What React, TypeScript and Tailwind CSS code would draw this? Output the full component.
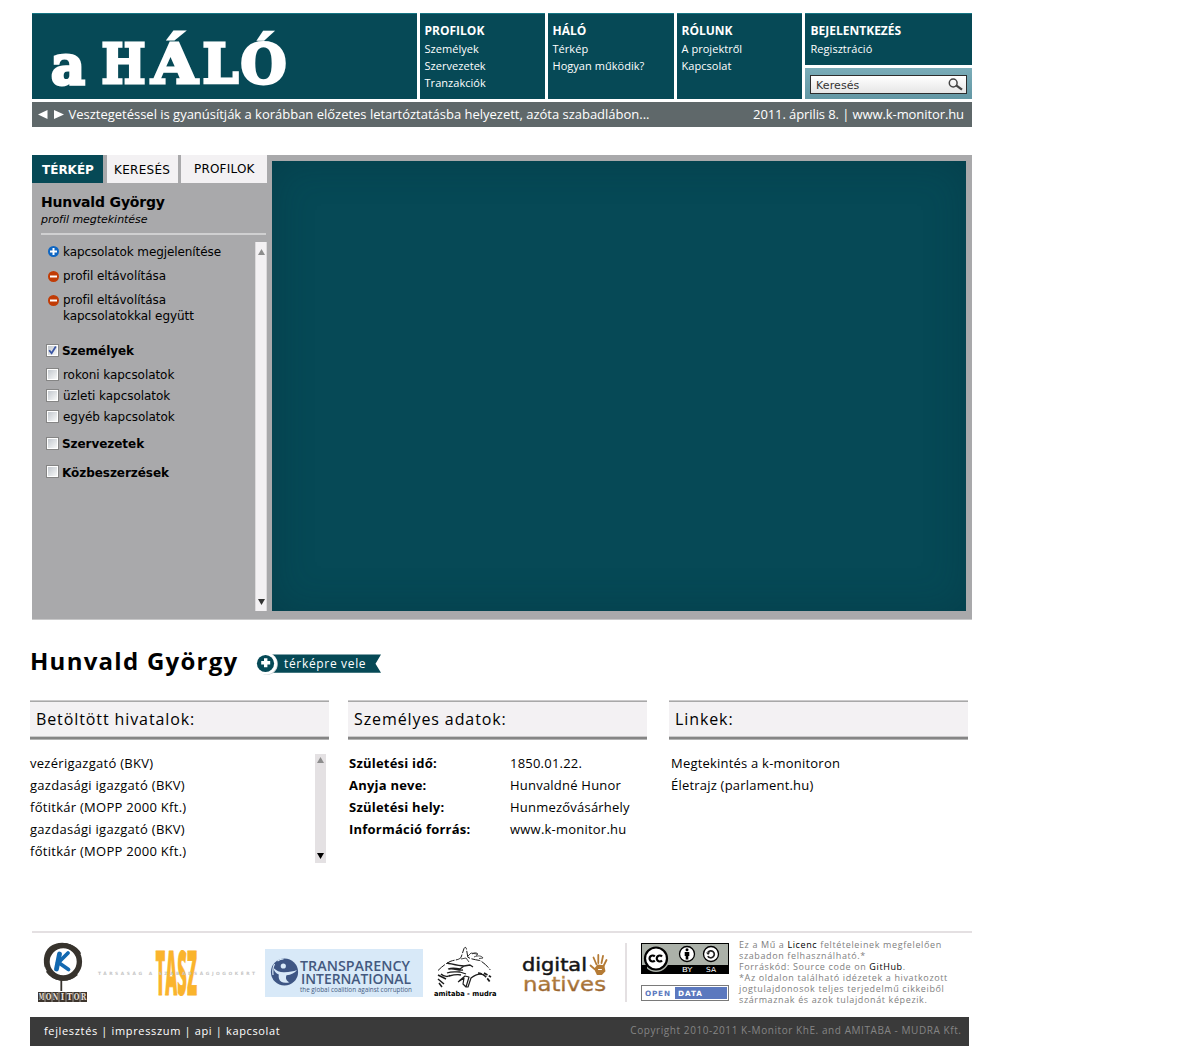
import type { ReactNode } from "react";

const DARK = "#064956";

const navGroups = [
  { title: "PROFILOK", width: "w-[125px]", items: ["Személyek", "Szervezetek", "Tranzakciók"] },
  { title: "HÁLÓ", width: "w-[126px]", items: ["Térkép", "Hogyan működik?"] },
  { title: "RÓLUNK", width: "w-[125px]", items: ["A projektről", "Kapcsolat"] },
];

function NavGroup({ title, items, className }: { title: string; items: string[]; className: string }) {
  return (
    <div className={`border-t border-[#157583] bg-[#064956] pt-2 text-white ${className}`}>
      <div className="mb-px text-[12px] leading-[17px] font-bold">{title}</div>
      {items.map((item) => (
        <div key={item} className="text-[11px] leading-[17px] tracking-[0.04px]">
          {item}
        </div>
      ))}
    </div>
  );
}

function Logo() {
  return (
    <svg width="385" height="85" viewBox="32 14 385 85" role="img" aria-label="a HÁLÓ">
      <g
        fill="#fff"
        stroke="#fff"
        strokeWidth="3"
        fontFamily="'DejaVu Serif'"
        fontWeight="700"
        fontSize="53.5"
      >
        <text x="51" y="83.5" textLength="34" lengthAdjust="spacingAndGlyphs">a</text>
        <text y="82.500">
          <tspan x="101.500" textLength="44" lengthAdjust="spacingAndGlyphs">H</tspan>
          <tspan x="151.500" textLength="46" lengthAdjust="spacingAndGlyphs">Á</tspan>
          <tspan x="202.500" textLength="36" lengthAdjust="spacingAndGlyphs">L</tspan>
          <tspan x="240.500" textLength="46" lengthAdjust="spacingAndGlyphs">Ó</tspan>
        </text>
      </g>
    </svg>
  );
}

function Header() {
  return (
    <header className="ml-[32px] flex h-[86px] w-[940px] gap-[3px]">
      <div className="w-[385px] border-t border-[#157583] bg-[#064956]">
        <Logo />
      </div>
      {navGroups.map((g) => (
        <NavGroup key={g.title} title={g.title} items={g.items} className={`${g.width} pl-[4.5px]`} />
      ))}
      <div className="flex w-[167px] flex-col gap-[3px]">
        <NavGroup title="BEJELENTKEZÉS" items={["Regisztráció"]} className="h-[52px] pl-[5.5px]" />
        <div className="h-[31px] bg-gradient-to-b from-[#7aacb8] to-[#6397a4] px-[5px] pt-[7px]">
          <div className="flex h-[19px] items-center justify-between border border-[#2d2d2d] bg-gradient-to-b from-white to-[#e6e6e6] pr-[3px] pl-[5px] font-['DejaVu_Sans'] text-[11px] leading-[17px] tracking-[0.1px] text-[#333]">
            <span className="pt-px">Keresés</span>
            <svg width="15" height="13" viewBox="0 0 15 13" fill="none" stroke="#444">
              <circle cx="5.2" cy="5" r="3.9" strokeWidth="1.5" />
              <path d="M8.2 7.400 14 11.600" strokeWidth="2.300" />
            </svg>
          </div>
        </div>
      </div>
    </header>
  );
}

function NewsBar() {
  return (
    <div className="mt-[3px] ml-[32px] flex h-[25px] w-[940px] items-center bg-[#5f686a] pb-px text-[13px] leading-[24px] text-white">
      <svg width="26" height="11" viewBox="0 0 26 11" fill="#fff" className="ml-[6px]">
        <path d="M0 5.500 9.500 1v9z" />
        <path d="M26 5.500 16 1v9z" />
      </svg>
      <span className="ml-[4.500px] tracking-[-0.01px] whitespace-nowrap">
        Vesztegetéssel is gyanúsítják a korábban előzetes letartóztatásba helyezett, azóta szabadlábon...
      </span>
      <span className="mr-[8px] ml-auto tracking-[-0.09px]">2011. április 8. | www.k-monitor.hu</span>
    </div>
  );
}

function ScrollBar({ className, down = "#333" }: { className: string; down?: string }) {
  return (
    <div className={`flex flex-col items-center justify-between ${className}`}>
      <svg width="7" height="6" viewBox="0 0 7 6">
        <path d="M3.5 0 7 6H0z" fill="#8d8d8d" />
      </svg>
      <svg width="7" height="6" viewBox="0 0 7 6">
        <path d="M3.5 6 7 0H0z" fill={down} />
      </svg>
    </div>
  );
}

function ActionRow({ kind, children, className }: { kind: "plus" | "minus"; children: ReactNode; className: string }) {
  return (
    <div className={`flex text-[12px] leading-[16px] ${className}`}>
      <svg
        width="11"
        height="11"
        viewBox="0 0 11 11"
        className={kind === "plus" ? "mt-[2px] mr-[4px] shrink-0" : "mt-[3px] mr-[4px] shrink-0"}
      >
        <circle cx="5.5" cy="5.5" r="5.5" fill={kind === "plus" ? "#0f66c2" : "#c13c06"} />
        <path d="M2 5.5h7" stroke="#fff" strokeWidth="2" />
        {kind === "plus" && <path d="M5.5 2v7" stroke="#fff" strokeWidth="2" />}
      </svg>
      <div>{children}</div>
    </div>
  );
}

function CheckRow({
  label,
  checked = false,
  bold = false,
  className,
}: {
  label: string;
  checked?: boolean;
  bold?: boolean;
  className: string;
}) {
  return (
    <div className={`flex h-[13px] text-[12px] leading-[15px] ${className}`}>
      <span className="mr-[3px] block h-[13px] w-[13px] shrink-0 border border-[#858585] bg-white p-px">
        <span className="block h-[9px] w-[9px] bg-gradient-to-br from-[#c3c8ce] to-[#f7f8f8]">
          {checked && (
            <svg width="9" height="9" viewBox="0 0 9 9" fill="none" stroke="#3a55a4" strokeWidth="1.8">
              <path d="M1.2 4.2 3.6 7.2 7.8 0.6" />
            </svg>
          )}
        </span>
      </span>
      <span className={bold ? "font-bold tracking-[-0.05px]" : "pl-px tracking-[-0.05px]"}>{label}</span>
    </div>
  );
}

function Sidebar() {
  return (
    <aside className="flex w-[235px] flex-col font-['DejaVu_Sans'] text-black">
      <div className="flex h-[28px] text-[12px] leading-[30px]">
        <div className="w-[71px] bg-[#064956] pl-[10px] font-bold text-white">TÉRKÉP</div>
        <div className="ml-[4px] w-[71px] bg-[#f3f1f3] pl-[7px] tracking-[0.3px]">KERESÉS</div>
        <div className="ml-[3px] w-[86px] bg-[#f3f1f3] pl-[13px] leading-[28px] tracking-[0.2px]">PROFILOK</div>
      </div>
      <div className="mr-px ml-[9px] h-[52px] border-b-2 border-[#d0d0d1] pt-[9px]">
        <div className="text-[14px] leading-[20px] font-bold tracking-[-0.17px]">Hunvald György</div>
        <div className="text-[11px] leading-[16px] tracking-[-0.04px] italic">profil megtekintése</div>
      </div>
      <div className="mt-[7px] flex h-[369px] justify-between">
        <div className="pl-[14px]">
          <ActionRow kind="plus" className="mt-[2px] ml-[2px] tracking-[-0.09px]">
            kapcsolatok megjelenítése
          </ActionRow>
          <ActionRow kind="minus" className="mt-[8px] ml-[2px] tracking-[-0.05px]">
            profil eltávolítása
          </ActionRow>
          <ActionRow kind="minus" className="mt-[8px] ml-[2px] tracking-[-0.05px]">
            profil eltávolítása
            <br />
            kapcsolatokkal együtt
          </ActionRow>
          <CheckRow label="Személyek" bold checked className="mt-[20px]" />
          <CheckRow label="rokoni kapcsolatok" className="mt-[11px]" />
          <CheckRow label="üzleti kapcsolatok" className="mt-[8px]" />
          <CheckRow label="egyéb kapcsolatok" className="mt-[8px]" />
          <CheckRow label="Szervezetek" bold className="mt-[14px]" />
          <CheckRow label="Közbeszerzések" bold className="mt-[15px] leading-[17px]" />
        </div>
        <ScrollBar className="w-[12px] border-x border-[#dcdadc] bg-[#f3f1f3] pt-[7px] pb-[6px]" />
      </div>
    </aside>
  );
}

function MapPanel() {
  return (
    <section className="mt-[28px] ml-[32px] flex h-[465px] w-[940px] border-b border-[#c8c8c9] bg-[#a9a9ab]">
      <Sidebar />
      <div className="mt-[6px] ml-[5px] h-[450px] w-[694px] bg-[#064956] shadow-[inset_0_0_40px_rgba(0,40,50,0.28)]" />
    </section>
  );
}

function Ribbon() {
  return (
    <svg width="128" height="24" viewBox="255 652 128 24" className="ml-[17px]">
      <path d="M266 654.5H381L375.5 663.7 381 672.7H266z" fill={DARK} />
      <circle cx="267" cy="664" r="10.8" fill="#ccd5d7" />
      <circle cx="266" cy="663.5" r="11" fill="#fff" />
      <circle cx="265.5" cy="663.5" r="8.6" fill={DARK} />
      <path d="M261.2 662.8h9M265.7 658.3v9" stroke="#fff" strokeWidth="3.4" />
      <text x="284" y="668" fill="#fff" fontFamily="'Open Sans'" fontSize="12" letterSpacing="0.67">
        térképre vele
      </text>
    </svg>
  );
}

function Column({ title, children, className }: { title: string; children: ReactNode; className: string }) {
  return (
    <div className={`w-[299px] ${className}`}>
      <div className="border-t border-b border-t-[#cbcacb] border-b-[#b3b3b3]">
        <div className="border-t border-b-2 border-t-[#a8a8a8] border-b-[#858585]">
          <h2 className="h-[35px] border-b border-[#cbcacb] bg-[#f3f1f3] pl-[6px] text-[16px] leading-[34px] tracking-[0.9px]">
            {title}
          </h2>
        </div>
      </div>
      <div className="mt-[12px] text-[13px] leading-[22px]">{children}</div>
    </div>
  );
}

const offices = [
  "vezérigazgató (BKV)",
  "gazdasági igazgató (BKV)",
  "főtitkár (MOPP 2000 Kft.)",
  "gazdasági igazgató (BKV)",
  "főtitkár (MOPP 2000 Kft.)",
];

const facts = [
  ["Születési idő:", "1850.01.22."],
  ["Anyja neve:", "Hunvaldné Hunor"],
  ["Születési hely:", "Hunmezővásárhely"],
  ["Információ forrás:", "www.k-monitor.hu"],
];

function Profile() {
  return (
    <section className="ml-[30px] text-black">
      <div className="mt-[26px] flex h-[36px] items-center">
        <h1 className="w-[208px] pb-[6px] text-[24px] leading-[30px] font-bold tracking-[1.26px] whitespace-nowrap">
          Hunvald György
        </h1>
        <Ribbon />
      </div>
      <div className="mt-[18px] flex h-[231px]">
        <Column title="Betöltött hivatalok:" className="">
          <div className="flex justify-between">
            <ul className="tracking-[0.28px]">
              {offices.map((o, i) => (
                <li key={i}>{o}</li>
              ))}
            </ul>
            <ScrollBar down="#000" className="mt-[2px] mr-[3px] h-[109px] w-[11px] bg-[#e4e1e3] pt-[3px] pb-[4px]" />
          </div>
        </Column>
        <Column title="Személyes adatok:" className="ml-[19px]">
          <dl className="grid grid-cols-[161px_1fr] pl-px tracking-[0.22px]">
            {facts.map(([k, v]) => (
              <div key={k} className="contents">
                <dt className="font-bold">{k}</dt>
                <dd>{v}</dd>
              </div>
            ))}
          </dl>
        </Column>
        <Column title="Linkek:" className="ml-[22px]">
          <ul className="pl-[2px] tracking-[0.21px]">
            <li>Megtekintés a k-monitoron</li>
            <li>Életrajz (parlament.hu)</li>
          </ul>
        </Column>
      </div>
    </section>
  );
}

function KMonitorLogo() {
  return (
    <svg width="52" height="64" viewBox="37 941 52 64" className="ml-[5px]">
      <circle cx="63.2" cy="961.8" r="16.2" fill="#fff" stroke="#37332d" strokeWidth="5.4" />
      <path d="M46 967c-3-11 2-20 10-22 9-3 20 1 24 9M47 971c6 9 20 12 30 3" fill="none" stroke="#37332d" strokeWidth="2.6" />
      <path d="M61.3 979v12" stroke="#37332d" strokeWidth="1.8" />
      <g fill="none" stroke="#1268b0" strokeLinecap="round">
        <path d="M59.500 954 56.500 969" strokeWidth="4.8" />
        <path d="M68 953 58.500 962.5 68.500 969.500" strokeWidth="3.8" />
      </g>
      <rect x="38" y="992" width="49" height="10" fill="#3d352d" />
      {"MONITOR".split("").map((c, i) => (
        <text
          key={i}
          x={41.5 + i * 7}
          y="1000"
          textAnchor="middle"
          fill="#e4dfd9"
          fontFamily="'DejaVu Serif'"
          fontWeight="700"
          fontSize="8.5"
          textLength={c === "I" ? 3.5 : 5.6}
          lengthAdjust="spacingAndGlyphs"
        >
          {c}
        </text>
      ))}
      <path d="M45 992v10M52 992v10M59 992v10M66 992v10M73 992v10M80 992v10" stroke="#c9c3bd" strokeWidth=".7" />
    </svg>
  );
}

function TaszLogo() {
  return (
    <svg width="160" height="60" viewBox="97 944 160 60" className="ml-[8px]">
      <text
        transform="translate(155.500 995.500) scale(0.5 1.440)"
        fontFamily="'Open Sans'"
        fontWeight="800"
        fontSize="43"
        fill="#fab42d"
        stroke="#fab42d"
        strokeWidth="0.600"
        textLength="83"
        lengthAdjust="spacingAndGlyphs"
      >
        TASZ
      </text>
      <text
        x="98"
        y="976"
        fontFamily="'DejaVu Sans'"
        fontWeight="700"
        fontSize="4.4"
        fill="#c6c6c6"
        textLength="157"
        lengthAdjust="spacing"
      >
        TÁRSASÁG A SZABADSÁGJOGOKÉRT
      </text>
    </svg>
  );
}

function TransparencyLogo() {
  return (
    <svg width="158" height="48" viewBox="265 949 158 48" className="ml-[8px] bg-[#d8e9f8]">
      <circle cx="284.500" cy="972" r="13.600" fill="#3e5684" />
      <path d="M274.500 964c-2 4-2 7-1.500 11M277.500 961c2-1.500 4-2 6-2" fill="none" stroke="#d8e9f8" strokeWidth="1.200" />
      <circle cx="283.300" cy="966" r="2.600" fill="#d8e9f8" />
      <path
        d="M273.500 968c3 3 7 4.500 11 4.200 5-.3 9-.8 12.500-2.200-2 3-6 4.800-10.500 5.200-1.200 3-.3 5.500 3 7-5.500 1.500-9.500 0-10.500-3.500-.5-2-.3-3-.2-4.200-3-1-4.800-3.500-5.300-6.500z"
        fill="#d8e9f8"
      />
      <g fill="#44597f" fontFamily="'Open Sans'">
        <text x="300" y="971" fontSize="14.500" fontWeight="600" textLength="110" lengthAdjust="spacingAndGlyphs">
          TRANSPARENCY
        </text>
        <text x="301" y="984" fontSize="14.500" fontWeight="600" textLength="110" lengthAdjust="spacingAndGlyphs">
          INTERNATIONAL
        </text>
        <text x="300" y="991.500" fontSize="7" fontWeight="500" textLength="112" lengthAdjust="spacingAndGlyphs">
          the global coalition against corruption
        </text>
      </g>
    </svg>
  );
}

function AmitabaLogo() {
  return (
    <svg width="68" height="58" viewBox="432 944 68 58" className="ml-[9px]">
      <g fill="none" stroke="#1c1c1c" strokeWidth="1" strokeLinejoin="round">
        <path d="M438 970.500c4-4 8-7 12-9 5-2 8-1 11-4l3-9c.8-1.500 2-1.500 2.400.2l1.400 8.500c3 2 8 2.500 12 3.300 4 2 8 6 10.500 9.500" strokeDasharray="9 1.500" />
        <path d="M461 959l5-1 3 4M468 956l3-3 6 1M472 954c3-2 5-1 6 0l-2 1.500M474 957c4-2 8-1 9 1l-4 .5" strokeWidth=".8" />
        <path d="M447 963c5 1 11 3 17 3l-4 3c-5-1-9-1-12 0M449 969c6-1 9 2 14 1M447 973c5-2 9-1 13-1l6 2M449 976c4-1 8-2 12-1M464 966l6-1 3 2" strokeWidth="1.300" />
        <path d="M438 975l8 4M438 979l6 5M441 974c3 3 8 3 9 1M439 983l3 4" strokeWidth="1.500" />
        <path d="M459 981l6-5 4 1-3 10-3-3 1-6-6 4M466 987l2 0 3-9c5-4 9-5 13-3" strokeWidth="1.200" />
        <path d="M478 973c4 0 8 3 12 9M484 973l7 4" strokeDasharray="4 1.500" strokeWidth="1.700" />
      </g>
      <text x="434" y="996" fontFamily="'DejaVu Sans'" fontWeight="700" fontSize="7" fill="#000" textLength="62.500" lengthAdjust="spacingAndGlyphs">
        amitaba - mudra
      </text>
    </svg>
  );
}

function DigitalNativesLogo() {
  return (
    <svg width="92" height="48" viewBox="520 948 92 48" className="ml-[20px]">
      <defs>
        <linearGradient id="rust" x1="0" y1="0" x2="0" y2="1">
          <stop offset="0" stopColor="#c4914f" />
          <stop offset="1" stopColor="#8f5a26" />
        </linearGradient>
      </defs>
      <g fontFamily="'DejaVu Sans'">
        <text x="522" y="969.500" fontSize="18.500" fill="#151515" stroke="#151515" strokeWidth=".5" textLength="65" lengthAdjust="spacingAndGlyphs">
          digital
        </text>
        <text x="523" y="989.500" fontSize="19.500" fill="url(#rust)" stroke="url(#rust)" strokeWidth=".3" textLength="83" lengthAdjust="spacingAndGlyphs">
          natives
        </text>
      </g>
      <g fill="none" stroke="#b57b35" strokeWidth="1.800" strokeLinecap="round">
        <path d="M590.500 964.500l4 3.500M593.500 956.500l3 7M598.300 954v8M603 955l-1.500 7M606.500 959l-3 6" />
        <path d="M595 968l3-3.500 5.500.5 1 5-3 3h-4z" fill="#b57b35" />
        <path d="M598.500 968.500h3" stroke="#fff" strokeWidth="1" />
      </g>
    </svg>
  );
}

function CreativeCommonsBadge() {
  return (
    <svg width="88" height="31" viewBox="0 0 88 31">
      <rect width="88" height="31" fill="#000" />
      <rect x="1" y="1" width="86" height="21" fill="#abb1a9" />
      <circle cx="15" cy="15.500" r="13.500" fill="#abb1a9" />
      <path d="M1 22h5v8H1z" fill="#000" />
      <circle cx="15" cy="15.500" r="11" fill="#fff" stroke="#000" strokeWidth="2.200" />
      <g fill="none" stroke="#000" strokeWidth="2.200">
        <path d="M13.800 13.500a3 3 0 1 0 0 4M21 13.500a3 3 0 1 0 0 4" />
      </g>
      <g fill="#fff" stroke="#000" strokeWidth="1.300">
        <circle cx="46" cy="11" r="7.500" />
        <circle cx="70" cy="11" r="7.500" />
      </g>
      <circle cx="46" cy="6.800" r="1.500" />
      <path d="M43.700 9h4.600v4h-1v3.500h-2.600V13h-1z" />
      <path d="M66.800 9.500a3.500 3.500 0 1 1 0 3.600" fill="none" stroke="#222" strokeWidth="1.700" />
      <path d="M65 9.500h4.200l-2.100 2.600z" fill="#222" />
      <g fill="#fff" fontFamily="'DejaVu Sans'" fontSize="7">
        <text x="41" y="29" textLength="10.500" lengthAdjust="spacingAndGlyphs">BY</text>
        <text x="65" y="29" textLength="10" lengthAdjust="spacingAndGlyphs">SA</text>
      </g>
    </svg>
  );
}

function OpenDataBadge() {
  return (
    <svg width="88" height="16" viewBox="0 0 88 16">
      <rect x=".5" y=".5" width="87" height="15" fill="#fff" stroke="#7a7a7a" />
      <rect x="34" y="2" width="52" height="12" fill="#5b78be" />
      <g fontFamily="'DejaVu Sans'" fontSize="7.300" fontWeight="700">
        <text x="4" y="10.800" fill="#5b78be" textLength="25" lengthAdjust="spacing">OPEN</text>
        <text x="37" y="10.800" fill="#fff" textLength="24" lengthAdjust="spacing">DATA</text>
      </g>
    </svg>
  );
}

function Partners() {
  return (
    <section className="ml-[32px] flex h-[86px] w-[940px] border-t-2 border-[#e4e0e2]">
      <div className="flex h-[80px] w-[593px] items-center">
        <KMonitorLogo />
        <TaszLogo />
        <TransparencyLogo />
        <AmitabaLogo />
        <DigitalNativesLogo />
      </div>
      <div className="mt-[10px] h-[59px] w-[2px] bg-[#e4e0e2]" />
      <div className="mt-[10px] ml-[14px] flex flex-col gap-[11px]">
        <CreativeCommonsBadge />
        <OpenDataBadge />
      </div>
      <p className="mt-[6px] ml-[10px] text-[9px] leading-[11px] tracking-[0.62px] whitespace-nowrap text-[#808080]">
        Ez a Mű a <span className="text-black">Licenc</span> feltételeinek megfelelően
        <br />
        szabadon felhasználható.*
        <br />
        Forráskód: Source code on <span className="text-black">GitHub</span>.
        <br />
        *Az oldalon található idézetek a hivatkozott
        <br />
        jogtulajdonosok teljes terjedelmű cikkeiből
        <br />
        származnak és azok tulajdonát képezik.
      </p>
    </section>
  );
}

function Footer() {
  return (
    <footer className="ml-[30px] flex h-[29px] w-[939px] justify-between bg-[#3a3a3a] pr-[7.500px] pl-[14px] leading-[28px]">
      <span className="text-[11px] tracking-[0.65px] text-white">fejlesztés | impresszum | api | kapcsolat</span>
      <span className="text-[10px] leading-[27px] tracking-[0.57px] text-[#858585]">
        Copyright 2010-2011 K-Monitor KhE. and AMITABA - MUDRA Kft.
      </span>
    </footer>
  );
}

export default function App() {
  return (
    <div className="h-[1046px] w-[1200px] overflow-hidden bg-white pt-[13px] font-['Open_Sans',sans-serif]">
      <Header />
      <NewsBar />
      <MapPanel />
      <Profile />
      <Partners />
      <Footer />
    </div>
  );
}
